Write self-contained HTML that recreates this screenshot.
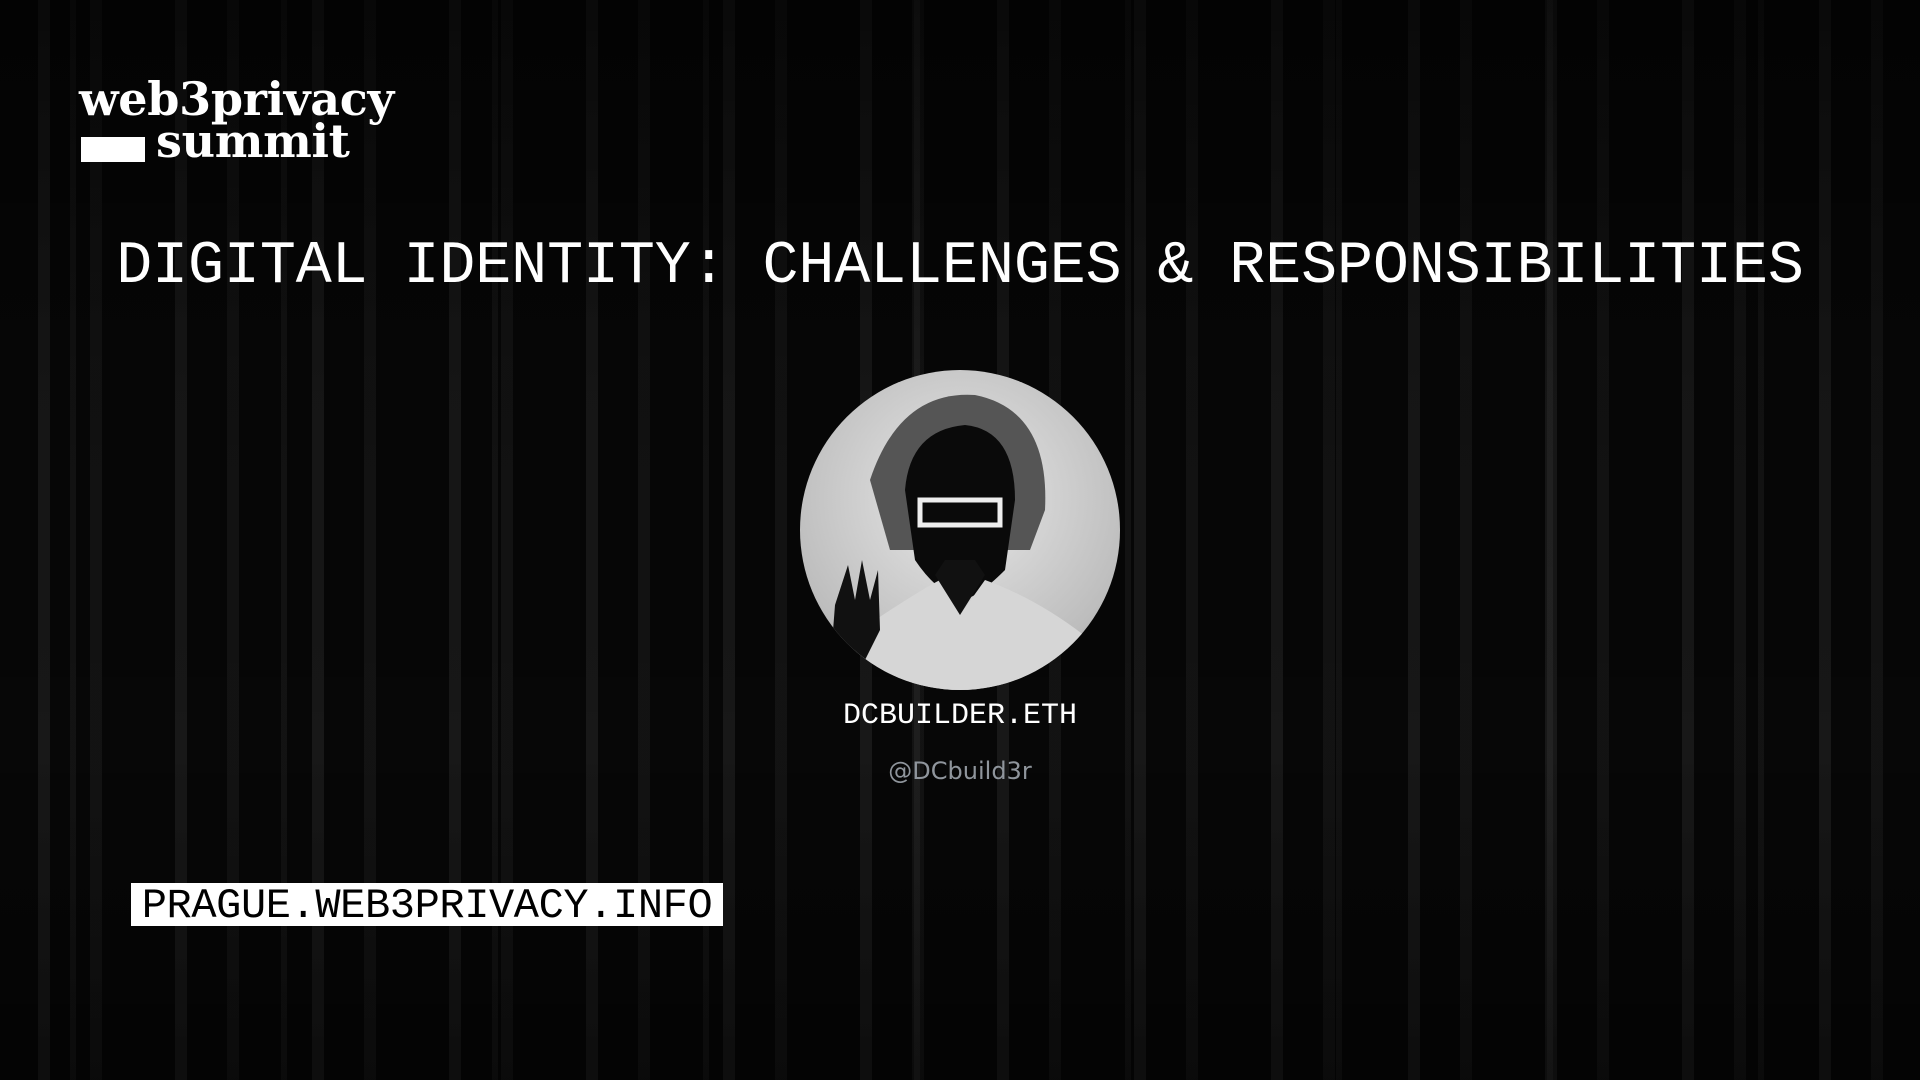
<!DOCTYPE html>
<html><head><meta charset="utf-8"><style>
html,body{margin:0;padding:0}
body{width:1920px;height:1080px;overflow:hidden;background:#070707;position:relative;font-family:"Liberation Mono",monospace;color:#fff}
.bg{position:absolute;inset:0;background:
repeating-linear-gradient(90deg,transparent 0 38px,rgba(255,255,255,.07) 38px 50px,transparent 50px 90px,rgba(255,255,255,.05) 90px 102px,transparent 102px 137px),
repeating-linear-gradient(90deg,transparent 0 70px,rgba(255,255,255,.05) 70px 76px,transparent 76px 211px);}
.fade{position:absolute;inset:0;background:linear-gradient(180deg,rgba(0,0,0,.6) 0,rgba(0,0,0,.15) 35%,rgba(0,0,0,.05) 70%,rgba(0,0,0,.45) 100%)}
.logo{position:absolute;left:79px;top:78px;font-family:"DejaVu Serif",serif;font-weight:bold;font-size:46px;line-height:42px;letter-spacing:-0.3px}
.bar{position:absolute;left:81px;top:137px;width:64px;height:25px;background:#fff}
.title{position:absolute;left:0;width:1920px;top:232px;text-align:center;font-size:60px;line-height:70px;letter-spacing:-0.1px}
.av{position:absolute;left:800px;top:370px;width:320px;height:320px;border-radius:50%;background:radial-gradient(circle at 50% 40%,#e8e8e8,#bdbdbd 70%,#999);overflow:hidden}
.name{position:absolute;left:0;width:1920px;top:699px;text-align:center;font-size:30px}
.handle{position:absolute;left:0;width:1920px;top:757px;text-align:center;font-family:"DejaVu Sans",sans-serif;font-size:24px;color:#8f959c}
.url{position:absolute;left:131px;top:883px;width:592px;height:43px;background:#fff;color:#000;font-size:42px;line-height:46px;text-align:center;letter-spacing:-0.4px}
</style></head><body>
<div class="bg"></div><div class="fade"></div>
<div class="logo"><div>web3privacy</div><div style="padding-left:77px">summit</div></div>
<div class="bar"></div>
<div class="title">DIGITAL IDENTITY: CHALLENGES &amp; RESPONSIBILITIES</div>
<div class="av"><svg width="320" height="320" viewBox="0 0 320 320">
<path d="M70 110 Q100 20 175 25 Q250 40 245 140 L230 180 L90 180 Z" fill="#555"/>
<path d="M105 120 Q110 60 165 55 Q215 60 215 130 L205 200 Q175 230 160 230 Q135 220 115 190 Z" fill="#0a0a0a"/>
<path d="M120 130 h80 v25 h-80z" fill="none" stroke="#eee" stroke-width="5"/>
<path d="M40 320 L60 260 Q120 220 140 210 L160 245 L185 210 Q240 230 290 270 L300 320 Z" fill="#d6d6d6"/>
<path d="M135 205 L160 245 L185 205 L175 190 L145 190 Z" fill="#111"/>
<path d="M30 300 L35 235 L48 195 L55 230 L62 190 L70 230 L78 200 L80 260 L60 300 Z" fill="#111"/>
</svg></div>
<div class="name">DCBUILDER.ETH</div>
<div class="handle">@DCbuild3r</div>
<div class="url">PRAGUE.WEB3PRIVACY.INFO</div>
</body></html>
